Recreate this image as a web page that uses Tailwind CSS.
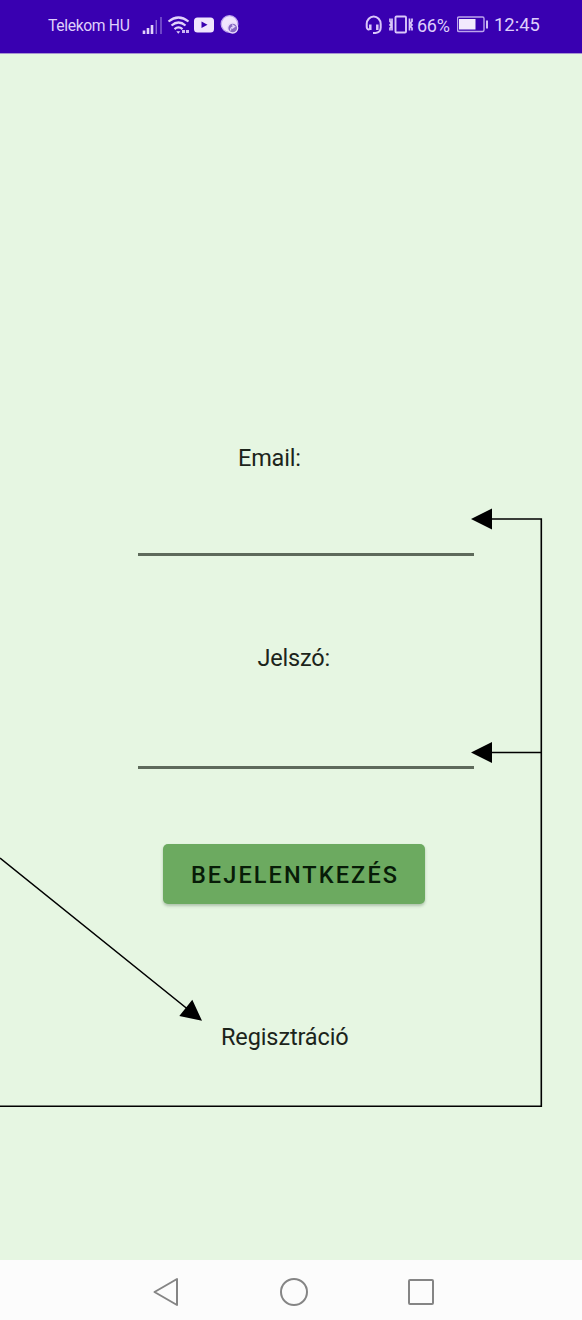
<!DOCTYPE html>
<html lang="hu">
<head>
<meta charset="utf-8">
<title>Bejelentkezés</title>
<script src="https://cdn.jsdelivr.net/npm/@tailwindcss/browser@4"></script>
</head>
<body class="bg-[#e6f6e2] font-['Roboto',sans-serif]">
<div class="relative flex h-[1320px] w-[582px] flex-col overflow-hidden">
  <header class="flex h-[54px] shrink-0 items-center border-b border-[#a795cf] bg-[#3900b1] pb-[3px] pl-12 text-[#dfcffb]">
    <span class="w-[94px] whitespace-nowrap pt-px text-[15.700px] tracking-[-0.350px]">Telekom HU</span>
    <svg class="h-10 w-[108px] shrink-0" viewBox="142 5 108 40" fill="none" stroke="#e2d3fb">
      <path d="M144 34v-3.500M148 34v-6M152 34v-9" stroke-width="2.600"/>
      <path d="M156.300 34v-14M161 34v-17" stroke="#8664d2" stroke-width="1.400"/>
      <path d="M168.500 21.500q10-8 20 0M171.500 25.500q7-6 14 0M174.500 29.200q4-3.500 8 0" stroke-width="2.200"/>
      <path d="M176.300 31.300h4l-2 2.400z" fill="#e2d3fb" stroke="none"/>
      <path d="M182 31.500h3m1 0h3" stroke-width="3" stroke="#cdb6f4"/>
      <rect x="194" y="17.500" width="20" height="15" rx="3.500" fill="#f0e5fd" stroke="none"/>
      <path d="M201.500 21.500v6.500l6-3.200z" fill="#3900b1" stroke="none"/>
      <circle cx="229.500" cy="24" r="8.300" fill="#f0e5fd" stroke="#bfa5ef" stroke-width="1.300"/>
      <circle cx="232.700" cy="28" r="5" fill="#8668c3" stroke="#e8dafc" stroke-width="1.300"/>
      <path d="M230.500 30.500q0-4 4-4m-2.500-1.800 2.700 1.800-2.700 2" stroke-width="1.200"/>
    </svg>
    <svg class="ml-[115px] h-10 w-[52px] shrink-0" viewBox="365 5 52 40" fill="none" stroke="#dac7fa">
      <path d="M369.500 29.500h-1q-1.800-.500-1.800-3v-2.500a7 7.500 0 0 1 14 0v3.500q0 5-5.200 5.500h-2.500" stroke-width="2"/>
      <path d="M370.300 24.500v5.500M377.300 24.500v5.500" stroke-width="2.500"/>
      <rect x="395.500" y="16.500" width="10.500" height="16" rx="1" stroke-width="1.900"/>
      <path d="M390 18.500v3l1.500 1.500-1.500 2 1.500 1.500-1.500 1.500v2.500M392 18.500v12M409.500 18.500v12M412 18.500v3l-1.500 1.500 1.500 2-1.500 1.500 1.500 1.500v2.500" stroke-width="1.700"/>
    </svg>
    <span class="w-[40px] whitespace-nowrap text-[18px] tracking-[-0.300px]">66%</span>
    <svg class="h-10 w-[34px] shrink-0" viewBox="456.500 5 34 40" fill="none">
      <rect x="457" y="17" width="26.500" height="14.500" rx="1.500" stroke="#bca5ec" stroke-width="1.400"/>
      <path d="M458.500 19h16.500v10.500h-16.500z" fill="#f3eafd"/>
      <path d="M486.500 20.500v8" stroke="#d2bdf6" stroke-width="2"/>
    </svg>
    <span class="ml-[3px] whitespace-nowrap text-[18.400px]">12:45</span>
  </header>

  <main class="flex h-[1206px] shrink-0 flex-col text-[#1c241b] text-[23.500px] tracking-[-0.200px]">
    <label for="email" class="ml-[238px] mt-[390px] h-7 leading-7">Email:</label>
    <input id="email" type="email" class="ml-[138px] mt-3 h-[72px] w-[336px] border-b-[3px] border-[#5e6a5b] bg-transparent outline-none">
    <label for="password" class="ml-[257.500px] mt-[88px] h-7 leading-7">Jelszó:</label>
    <input id="password" type="password" class="ml-[138px] mt-6 h-[73px] w-[336px] border-b-[3px] border-[#5e6a5b] bg-transparent outline-none">
    <button class="ml-[163px] mt-[75px] flex h-[60px] w-[262px] items-center justify-center rounded-[5px] bg-[#6caa60] pl-0.5 pt-[3px] text-[23.500px] font-medium tracking-[2.100px] text-[#081c08] shadow-[0_2px_3px_rgba(50,80,50,0.3)]">BEJELENTKEZÉS</button>
    <a class="ml-[221px] mt-[119px] h-7 leading-7 tracking-[-0.120px]">Regisztráció</a>
  </main>

  <nav class="flex h-[60px] shrink-0 items-center bg-[#fcfcfc] pl-[152px] pt-[4px]">
    <svg class="h-8 w-7" viewBox="0 0 28 32" fill="none" stroke="#858585" stroke-width="2" stroke-linejoin="round"><path d="M2.500 16 25 3v26z"/></svg>
    <svg class="ml-[98px] h-8 w-8" viewBox="0 0 32 32" fill="none" stroke="#858585" stroke-width="2"><circle cx="16" cy="16" r="13"/></svg>
    <svg class="ml-[95px] h-8 w-8" viewBox="0 0 32 32" fill="none" stroke="#858585" stroke-width="2"><rect x="4" y="4" width="24" height="24" rx="1"/></svg>
  </nav>

  <svg class="pointer-events-none absolute inset-0 h-[1320px] w-[582px]" viewBox="0 0 582 1320" fill="none" stroke="#000" stroke-width="1.600">
    <path d="M0 1106.200H541.300V519H490M542 752.500H490M0 858 190 1011"/>
    <path d="M471 519 492 508.500v21zM471 752.500 492 742v21zM202 1020.800 192.300 999.800 179.300 1016z" fill="#000" stroke="none"/>
  </svg>
</div>
</body>
</html>
